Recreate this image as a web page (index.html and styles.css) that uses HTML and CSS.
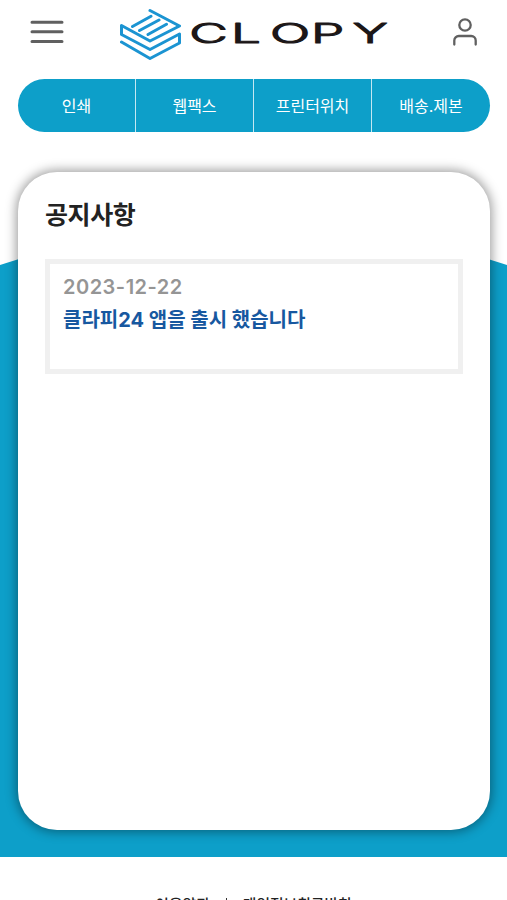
FILE: index.html
```html
<!DOCTYPE html>
<html lang="ko">
<head>
  <meta charset="UTF-8" />
  <meta name="viewport" content="width=device-width, initial-scale=1.0"/>
  <title>CLOPY</title>
  <link rel="stylesheet" href="styles.css">
</head>
<body>
  <header>
    <button class="icon-button" aria-label="메뉴">
      <svg width="34" height="26" viewBox="0 0 34 26" fill="none" stroke="#606060" stroke-width="3" stroke-linecap="round">
        <path d="M2 3.200h30M2 12.800h30M2 22.600h30"/>
      </svg>
    </button>
    <a class="logo" href="#">
      <svg width="62" height="54" viewBox="0 0 62 54" fill="none" stroke="#1b94d2" stroke-width="3" stroke-linecap="round" stroke-linejoin="round">
        <path d="M31 2.500L60.500 18L31 33L2.500 17.500V26.500L31 41.500L60.500 26V35L31 50.500L2.500 34M13.500 18.500L32 8.200M20.500 22.500L40 12M29 26.500L47.500 16.200"/>
      </svg>
      <svg class="logo-name" width="206" height="44" viewBox="0 0 206 44">
        <text transform="scale(2 1)" y="32" x="2.100 23 42.500 63 83.800">CLOPY</text>
      </svg>
    </a>
    <button class="icon-button" aria-label="내 정보">
      <svg width="26" height="30" viewBox="0 0 26 30" fill="none" stroke="#606060" stroke-width="2.300">
        <circle cx="13" cy="8" r="5.700"/>
        <path d="M2.300 27.500V23.500a4.500 4.500 0 0 1 4.500-4.500h12.400a4.500 4.500 0 0 1 4.500 4.500v4" stroke-linecap="round"/>
      </svg>
    </button>
  </header>

  <nav class="main-nav">
    <a href="#">인쇄</a>
    <a href="#">웹팩스</a>
    <a href="#">프린터위치</a>
    <a href="#">배송.제본</a>
  </nav>

  <main>
    <section class="notice-card">
      <h1>공지사항</h1>
      <article class="notice">
        <div class="notice-date">2023-12-22</div>
        <div class="notice-title">클라피24 앱을 출시 했습니다</div>
      </article>
    </section>
  </main>

  <footer>
    <a href="#">이용약관</a>
    <span class="footer-line"></span>
    <a href="#">개인정보취급방침</a>
  </footer>
</body>
</html>
```

FILE: styles.css
```css
* {
  box-sizing: border-box;
}
body {
  margin: 0;
  height: 900px;
  overflow: hidden;
  font-family: Inter, 'Noto Sans CJK KR', sans-serif;
  background-color: #fff;
  color: #222;
}
a {
  color: inherit;
  text-decoration: none;
}
header {
  height: 79px;
  padding: 8px 29px 0 30px;
  display: flex;
  align-items: flex-start;
}
.icon-button {
  height: 47px;
  padding: 0;
  border: none;
  background: none;
  display: flex;
  align-items: center;
}
.logo {
  display: flex;
  align-items: flex-start;
  margin-left: 55px;
  margin-right: auto;
}
.logo svg {
  flex: none;
}
.logo-name {
  margin: 3px 0 0 4px;
}
.logo-name text {
  font-family: Inter, sans-serif;
  font-size: 26.5px;
  font-weight: 300;
  fill: #1c1718;
  stroke: #1c1718;
  stroke-width: 1.6px;
  stroke-linejoin: round;
  vector-effect: non-scaling-stroke;
}
.main-nav {
  display: grid;
  grid-template-columns: 117px 118px 118px 1fr;
  height: 53px;
  margin: 0 17px 0 18px;
  border-radius: 27px;
  overflow: hidden;
  background-color: #0d9fc9;
}
.main-nav a {
  display: flex;
  align-items: center;
  justify-content: center;
  padding-bottom: 2px;
  color: #fff;
  font-size: 16px;
}
.main-nav a + a {
  border-left: 1px solid #c5e8f2;
}
main {
  height: 725px;
  padding: 40px 17px 27px 18px;
  background: linear-gradient(#0d9fc9, #0d9fc9) 0 133px / 100% 592px no-repeat;
  position: relative;
}
/* sloping top edge of the blue area */
main::before {
  content: '';
  position: absolute;
  top: 53px;
  left: 0;
  right: 0;
  height: 80px;
  background-color: #0d9fc9;
  clip-path: polygon(50% 0, 100% 100%, 0 100%);
}
.notice-card {
  position: relative;
  height: 658px;
  padding: 24px 27px;
  border-radius: 39px;
  background-color: #fff;
  box-shadow: 0 0 11px 2px rgba(0, 0, 0, 0.38);
}
h1 {
  margin: 0 0 25px;
  font-size: 25px;
  line-height: 38px;
  letter-spacing: -0.4px;
}
.notice {
  height: 115px;
  padding: 10px 13px;
  border: 5px solid #f0f0f0;
}
.notice-date {
  color: #959595;
  font-size: 20px;
  font-weight: 600;
  line-height: 26px;
  letter-spacing: 0.5px;
}
.notice-title {
  margin-top: 4px;
  color: #1758a0;
  font-size: 20px;
  font-weight: 700;
  line-height: 32px;
}
footer {
  display: flex;
  justify-content: center;
  align-items: center;
  padding-top: 38px;
  font-size: 14.8px;
  font-weight: 500;
  line-height: 20px;
}
.footer-line {
  width: 1px;
  height: 15px;
  margin: 0 16px;
  background-color: #333;
}
```
